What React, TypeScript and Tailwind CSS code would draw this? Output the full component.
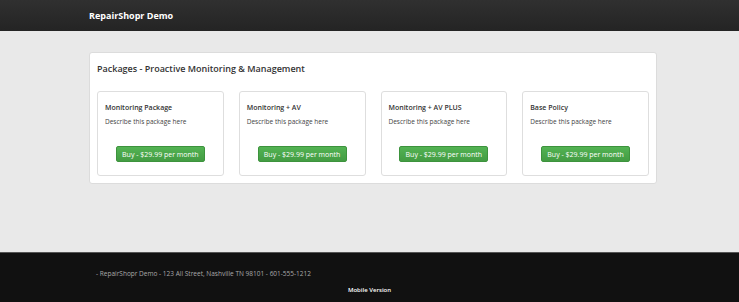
import React from "react";

const packages = [
  { name: "Monitoring Package", desc: "Describe this package here" },
  { name: "Monitoring + AV", desc: "Describe this package here" },
  { name: "Monitoring + AV PLUS", desc: "Describe this package here" },
  { name: "Base Policy", desc: "Describe this package here" },
];

export default function App() {
  return (
    <div className="flex flex-col min-h-[302px] bg-[#e9e9e9] font-['Open_Sans',sans-serif]">
      <div className="h-[31px] bg-gradient-to-b from-[#303030] to-[#242424] flex items-center pl-[89px]">
        <span className="text-white font-bold text-[9px]">RepairShopr Demo</span>
      </div>

      <div className="flex-1 pt-[21px] px-[89px] pb-[68px]">
        <div className="w-[568px] bg-white border border-[#dcdcdc] rounded-[3px] px-[7px] pt-[8px] pb-[7px]">
          <h2 className="text-[#333] font-semibold text-[9px] leading-[15px]">
            Packages - Proactive Monitoring &amp; Management
          </h2>
          <div className="mt-[15px] flex gap-[15px]">
            {packages.map((p) => (
              <div
                key={p.name}
                className="w-[127px] h-[85px] border border-[#dedede] rounded-[3px] px-[7px] pt-[10px] flex flex-col"
              >
                <div className="text-[#333] font-semibold text-[7px] leading-[12px]">{p.name}</div>
                <div className="text-[#444] text-[6.5px] leading-[12px] mt-[2px]">{p.desc}</div>
                <div className="flex justify-center mt-[18px]">
                  <button className="w-[89px] h-[16px] rounded-[2px] bg-gradient-to-b from-[#53b353] to-[#439c43] border border-[#3d933d] text-white text-[7px] leading-none">
                    Buy - $29.99 per month
                  </button>
                </div>
              </div>
            ))}
          </div>
        </div>
      </div>

      <div className="h-[50px] bg-[#111111] border-t border-[#555] flex flex-col">
        <div className="pl-[96px] pt-[16px] text-[#a9a9a9] text-[6.5px] leading-[10px]">
          - RepairShopr Demo - 123 All Street, Nashville TN 98101 - 601-555-1212
        </div>
        <div className="mt-[6px] text-center text-[#ffffff] font-semibold text-[6px] leading-[10px]">
          Mobile Version
        </div>
      </div>
    </div>
  );
}
